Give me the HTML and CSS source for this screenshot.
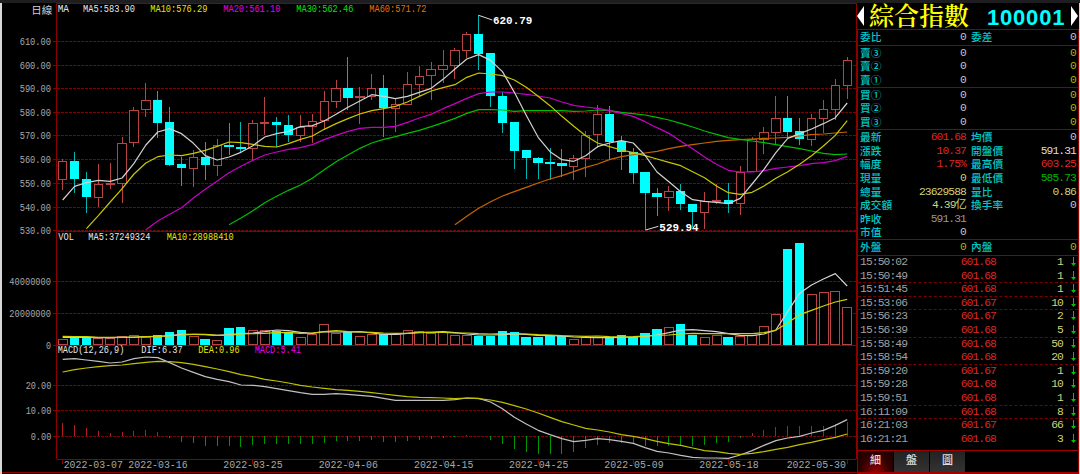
FILE: index.html
```html
<!DOCTYPE html>
<html lang="zh-Hant">
<head>
    <meta charset="UTF-8">
    <meta name="viewport" content="width=device-width, initial-scale=1.0">
    <title>綜合指數 100001</title>
    <link rel="stylesheet" href="styles.css">
</head>
<body>
    <div class="topbar"></div>
    <main class="screen">
        <!-- 3 chart units = 1px -->
        <svg class="chart" id="chart" viewBox="0 9 2571 1413" preserveAspectRatio="none"></svg>

        <aside class="quote">
            <header class="title">
                <span class="arrow left"></span>
                <h1>綜合指數</h1>
                <span class="code">100001</span>
                <span class="arrow right"></span>
            </header>
            <div class="panel">
                <section class="group ratio">
                    <div class="row"><b>委比</b><i>0</i><b>委差</b><i>0</i></div>
                </section>
                <section class="group sell">
                    <div class="row"><b>賣③</b><i>0</i><b></b><i class="gold">0</i></div>
                    <div class="row"><b>賣②</b><i>0</i><b></b><i class="gold">0</i></div>
                    <div class="row"><b>賣①</b><i>0</i><b></b><i class="gold">0</i></div>
                </section>
                <section class="group buy">
                    <div class="row"><b>買①</b><i>0</i><b></b><i class="gold">0</i></div>
                    <div class="row"><b>買②</b><i>0</i><b></b><i class="gold">0</i></div>
                    <div class="row"><b>買③</b><i>0</i><b></b><i class="gold">0</i></div>
                </section>
                <section class="group detail">
                    <div class="row"><b>最新</b><i class="red">601.68</i><b>均價</b><i>0</i></div>
                    <div class="row"><b>漲跌</b><i class="red">10.37</i><b>開盤價</b><i class="white">591.31</i></div>
                    <div class="row"><b>幅度</b><i class="red">1.75%</i><b>最高價</b><i class="red">603.25</i></div>
                    <div class="row"><b>現量</b><i class="pale">0</i><b>最低價</b><i class="green">585.73</i></div>
                    <div class="row"><b>總量</b><i class="pale">23629588</i><b>量比</b><i class="pale">0.86</i></div>
                    <div class="row"><b>成交額</b><i class="pale">4.39亿</i><b>換手率</b><i>0</i></div>
                    <div class="row"><b>昨收</b><i class="gray">591.31</i></div>
                    <div class="row"><b>市值</b><i>0</i></div>
                </section>
                <section class="group inout">
                    <div class="row"><b>外盤</b><i class="gold">0</i><b>內盤</b><i class="gold">0</i></div>
                </section>
                <section class="ticks" id="ticks"></section>
                <nav class="tabs">
                    <span class="tab active">細</span>
                    <span class="tab">盤</span>
                    <span class="tab">圖</span>
                </nav>
            </div>
        </aside>
        <div class="edge"></div>
    </main>
    <script src="chart.js"></script>
</body>
</html>
```
FILE: styles.css
```css
* {
    box-sizing: border-box;
}
body {
    margin: 0;
    width: 1080px;
    height: 474px;
    overflow: hidden;
    background-color: #000;
    color: #c8c8c8;
    font-family: "Liberation Mono", "Noto Sans CJK TC", monospace;
}
.topbar {
    height: 3px;
    background-color: #1e1e20;
}
.screen {
    display: flex;
    height: 471px;
    border-left: 2px solid #d8d8d8;
}

/* chart */
.chart {
    flex: none;
    width: 857px;
    height: 471px;
    margin-left: -2px;
}
.chart line, .chart rect {
    shape-rendering: crispEdges;
}
.chart .mark {
    shape-rendering: auto;
    stroke: #dcdcdc;
    stroke-width: 3;
}
.chart text {
    font-size: 31px;
    fill: #a0a0a0;
}
.chart .period {
    font-family: "Noto Sans CJK TC", sans-serif;
    font-size: 32px;
}
.chart .date {
    font-size: 35px;
}
.chart .peak {
    font-size: 34px;
    font-weight: bold;
}
.frame {
    stroke: #8c0000;
    stroke-width: 3;
    fill: none;
}
.grid {
    stroke: #820000;
    stroke-width: 3;
    stroke-dasharray: 9 3;
}
.up {
    stroke: #b94444;
    stroke-width: 3;
    fill: #000;
}
.down {
    stroke: #00ffff;
    stroke-width: 3;
    fill: #00ffff;
}
.wick.down {
    stroke: #00b4b4;
}
.bar-up {
    stroke: #b41e1e;
    stroke-width: 3;
}
.bar-down {
    stroke: #009600;
    stroke-width: 3;
}
.curve {
    fill: none;
    stroke-width: 3.6;
    stroke-linejoin: round;
}

/* quote panel */
.quote {
    flex: none;
    display: flex;
    flex-direction: column;
    width: 222px;
    height: 471px;
}
.title {
    display: flex;
    align-items: center;
    height: 26px;
    white-space: nowrap;
}
.title h1 {
    margin: 0 0 0 5px;
    width: 118px;
    height: 26px;
    font: 600 25px/23px "Noto Serif CJK TC", "Noto Sans CJK TC", serif;
    color: #ffff00;
}
.title .code {
    width: 81px;
    padding-top: 3px;
    font: 700 22px/26px "Liberation Sans", sans-serif;
    letter-spacing: 0.8px;
    color: #00ffff;
}
.arrow {
    width: 7px;
    height: 20px;
    background-color: #fff;
}
.arrow.left {
    clip-path: polygon(100% 0, 100% 100%, 0 50%);
}
.arrow.right {
    margin-left: 3px;
    clip-path: polygon(0 0, 100% 50%, 0 100%);
}
.panel {
    flex: 1;
    display: flex;
    flex-direction: column;
    border: 1px solid #8c0000;
    border-bottom: 2px solid #a00000;
}
.group {
    border-bottom: 1px solid #8c0000;
    padding-left: 2px;
}
.ratio { height: 15.5px; }
.sell, .buy { height: 42.4px; }
.detail { height: 110.2px; }
.inout { height: 15.5px; }
.row {
    display: grid;
    grid-template-columns: 44px 62px 49px 61px;
    height: 13.6px;
    line-height: 14px;
    white-space: nowrap;
}
.row b {
    font: 500 10.7px/14px "Noto Sans CJK TC", sans-serif;
    color: #00c8c8;
}
.row b:nth-child(3) {
    padding-left: 5px;
}
.row i {
    font-style: normal;
    font-size: 11.3px;
    letter-spacing: -0.9px;
    text-align: right;
}
.red { color: #dc2828; }
.gold { color: #b4b400; }
.pale { color: #d2d278; }
.green { color: #00b400; }
.gray { color: #969696; }
.white { color: #dcdcdc; }

.ticks {
    height: 195px;
    border-bottom: 1px solid #a00000;
}
.tick {
    display: grid;
    grid-template-columns: 65px 71px 67px 15px;
    height: 13.6px;
    padding-left: 2px;
    font-size: 11.3px;
    line-height: 12.4px;
    letter-spacing: -0.9px;
}
.tick.split {
    border-bottom: 1px dashed #780000;
}
.tick span {
    text-align: right;
}
.tick .time {
    text-align: left;
    color: #a0a0a0;
}
.tick svg {
    width: 7px;
    height: 10px;
    margin: 1px 0 0 7px;
    fill: #00c800;
}
.tabs {
    display: flex;
    gap: 1px;
    height: 21px;
}
.tab {
    width: 35px;
    background: linear-gradient(#222, #333);
    color: #e0e0e0;
    font: 500 11px/17px "Noto Sans CJK TC", sans-serif;
    text-align: center;
}
.tab.active {
    background: radial-gradient(ellipse at 50% 110%, #a00000, #300000 60%, #1a0000);
}
.edge {
    flex: 1;
    background-color: #f0c8c8;
}
```
FILE: chart.js
```js
const STEP = 35.66, X0 = 188;
const x = i => X0 + i * STEP;
const out = [];

// direction, high, body top, body bottom, low, volume top
const candles = `
u 477 482 538 570 343|d 456 482 534 578 338|d 516 536 590 638 337|u 491 553 592 620 338|u 489 550 554 567 338
u 412 428 550 608 332|u 322 329 428 442 329|u 249 301 329 350 337|d 273 301 366 414 330|d 321 367 493 497 322
d 471 493 502 557 316|u 450 472 506 560 332|d 427 472 493 540 342|u 417 436 495 529 346|d 369 436 440 465 309
d 366 440 444 455 306|u 359 370 446 482 316|u 291 367 371 405 316|d 350 367 373 440 317|d 346 374 404 427 322
u 344 380 406 425 335|u 342 362 380 430 326|u 272 304 362 388 298|u 241 265 304 324 325|d 171 265 292 329 321
u 261 289 293 372 332|u 223 265 289 299 327|d 226 265 322 412 327|u 296 311 325 395 328|u 216 253 313 316 314
u 197 227 253 290 317|u 185 206 227 300 323|u 150 196 207 250 322|u 145 151 196 238 329|u 97 102 151 175 330
d 46 102 159 210 333|d 160 160 287 321 332|d 277 288 366 399 319|d 366 367 450 507 321|d 450 451 473 537 336
d 471 473 486 537 336|d 443 487 489 540 333|d 446 489 497 531 333|u 464 474 498 539 343|u 392 404 475 531 337
u 316 342 404 443 335|d 319 342 424 477 339|d 407 424 455 509 331|d 444 456 517 552 337|d 517 517 578 690 324
d 563 578 590 649 313|u 558 574 592 633 307|d 552 574 611 630 296|d 612 612 635 680 331|u 576 604 637 686 335
u 553 599 605 613 331|d 549 599 609 639 336|u 498 515 610 644 332|u 411 417 515 515 330|u 381 397 418 461 304
u 288 355 397 433 268|d 288 354 394 412 71|d 354 394 416 435 53|u 342 355 418 437 208|u 300 328 355 400 202
u 238 256 328 360 199|u 171 181 256 297 247`.trim().split(/[|\n]/).map(s => s.split(' '));

const ma5 = [600,559,548,541,544,534,490,435,396,386,401,430,467,480,471,457,437,411,401,394,380,377,363,343,322,303,284,289,296,289,277,265,238,207,177,164,181,215,277,346,412,455,479,484,467,440,429,422,429,466,516,545,575,599,604,607,611,595,552,508,458,415,401,387,371,353,309];
const ma10 = [686,647,606,566,522,489,470,465,467,460,451,439,426,428,433,439,441,431,418,408,388,371,356,342,332,326,319,306,289,273,263,254,232,219,222,227,240,262,289,317,349,379,407,429,440,450,458,467,477,487,497,515,533,558,578,583,577,558,535,515,493,467,438,406,362];
const ma20 = [689,663,643,623,594,568,543,518,499,481,465,456,448,443,434,419,406,394,385,382,382,379,367,354,343,326,311,295,281,276,276,279,283,288,294,306,316,321,325,332,340,349,365,383,400,424,446,471,493,511,516,516,512,505,501,497,491,488,482,469];
const ma30 = [674,654,632,608,589,571,555,535,509,485,465,445,429,418,410,400,391,380,368,355,340,329,329,330,334,332,332,332,332,334,333,330,332,337,341,345,352,360,370,381,393,403,413,418,423,428,434,440,446,453,460,464,462];
const ma60 = [674,649,625,605,588,575,562,549,537,527,515,502,492,479,470,464,459,454,446,439,434,429,424,421,419,417,415,414,412,408,404,402,399,396];
const vol5 = [337,337,337,338,338,337,337,335,334,332,328,328,329,331,329,326,324,320,315,317,322,325,320,321,321,320,324,328,328,325,322,322,320,323,327,330,330,329,327,328,331,332,333,336,337,338,338,337,336,334,330,323,315,314,317,320,326,331,332,327,315,259,205,180,162,146,183];
const vol10 = [334,335,335,337,337,337,336,335,334,333,330,328,328,331,331,327,326,325,323,322,325,324,320,317,320,321,322,324,325,325,323,322,322,324,324,326,327,326,326,327,329,330,332,333,334,333,335,336,335,333,331,330,327,325,326,326,326,326,326,323,316,293,269,256,243,231,223];
const dif = [403,401,405,409,414,411,401,396,398,413,429,442,455,463,470,480,481,485,491,497,503,508,508,506,508,511,514,520,526,526,526,526,526,524,519,520,531,551,577,597,616,629,641,650,646,641,644,649,655,668,679,684,691,697,699,699,700,690,677,661,647,639,634,624,616,601,584];
const dea = [441,434,429,425,422,420,416,412,409,410,413,418,425,432,440,449,455,463,468,474,481,486,490,494,496,499,503,507,511,515,517,518,519,521,519,521,525,532,542,552,564,577,590,600,610,615,621,629,634,641,649,656,661,669,677,680,685,688,685,680,673,667,659,652,644,637,627];
const macd = [594,600,609,618,625,622,617,614,620,638,650,655,662,662,662,665,660,657,657,657,657,657,653,648,647,647,644,650,650,647,644,641,639,637,630,634,644,657,672,680,686,686,686,680,670,660,654,654,657,662,664,662,662,663,660,655,650,639,625,614,605,604,604,604,602,597,592];

function line(x1, y1, x2, y2, cls) {
    out.push(`<line x1="${x1}" y1="${y1}" x2="${x2}" y2="${y2}" class="${cls}"/>`);
}
// w is the drawn width of the text, left is its left edge
function label(str, left, base, w, color, cls = '') {
    out.push(`<text x="${left}" y="${base}" textLength="${w}" lengthAdjust="spacingAndGlyphs" style="fill:${color}" class="${cls}">${str}</text>`);
}
function curve(values, color, offset = 0) {
    const first = candles.length - values.length;
    const pts = values.map((v, i) => `${x(first + i).toFixed(1)},${v + offset}`).join(' ');
    out.push(`<polyline class="curve" points="${pts}" stroke="${color}"/>`);
}

// grids and axis labels
[['610.00', 124], ['600.00', 195], ['590.00', 266], ['580.00', 338], ['570.00', 407], ['560.00', 479], ['550.00', 550], ['540.00', 621], ['530.00', 692]].forEach(([t, y]) => {
    line(160, y, 2568, y, 'grid');
    label(t, 59, y + 11, 94, '#a8a8a8');
});
[['40000000', 845, 28, 125], ['20000000', 940, 28, 125], ['0', 1036, 138, 15], ['20.00', 1156, 77, 77], ['10.00', 1232, 77, 77], ['0.00', 1309, 92, 62]].forEach(([t, y, l, w]) => {
    line(160, y, 2568, y, 'grid');
    label(t, l, y + 11, w, '#a8a8a8');
});
line(170, 10, 2568, 10, 'frame');
line(170, 694, 2568, 694, 'frame');
line(170, 1036, 2568, 1036, 'frame');
line(170, 1378, 2568, 1378, 'frame');
line(6, 1418, 2571, 1418, 'frame');
line(170, 10, 170, 1378, 'frame');
line(2568, 10, 2568, 1378, 'frame');

candles.forEach(([d, high, top, bottom, low, vol], i) => {
    const cls = d === 'u' ? 'up' : 'down';
    const c = x(i);
    line(c, high, c, top, `wick ${cls}`);
    line(c, bottom, c, low, `wick ${cls}`);
    out.push(`<rect x="${c - 12.5}" y="${+top + 1}" width="25" height="${Math.max(bottom - top - 1, 1)}" class="${cls}"/>`);
    out.push(`<rect x="${c - 13}" y="${+vol + 676}" width="${d === 'u' ? 27 : 25}" height="${356 - vol}" class="${cls}"/>`);
    const m = macd[i];
    line(c, 1309, c, m + 675, m < 634 ? 'bar-up' : 'bar-down');
});

curve(ma60, '#c86400');
curve(ma30, '#00be00');
curve(ma20, '#c800c8');
curve(ma10, '#c8c800');
curve(ma5, '#d2d2d2');
curve(vol5, '#d2d2d2', 675);
curve(vol10, '#d2d200', 675);
curve(dif, '#c0c0c0', 675);
curve(dea, '#c0c000', 675);

// captions of the three panes
label('日線', 94, 42, 63, '#d2d2d2', 'period');
label('MA', 173, 35, 34, '#e6e6e6');
label('MA5:583.90', 249, 35, 156, '#e6e6e6');
label('MA10:576.29', 451, 35, 171, '#e6e600');
label('MA20:561.10', 670, 35, 171, '#e600e6');
label('MA30:562.46', 889, 35, 171, '#00e600');
label('MA60:571.72', 1108, 35, 171, '#e67300');
label('VOL', 175, 719, 47, '#e6e6e6');
label('MA5:37249324', 265, 719, 186, '#e6e6e6');
label('MA10:28988410', 500, 719, 201, '#e6e600');
label('MACD(12,26,9)', 173, 1059, 200, '#e6e6e6');
label('DIF:6.37', 424, 1059, 124, '#e6e6e6');
label('DEA:0.96', 595, 1059, 124, '#e6e600');
label('MACD:5.41', 764, 1059, 139, '#e600e6');

// highest and lowest price
line(1436, 46, 1477, 60, 'mark');
label('620.79', 1479, 73, 118, '#fff', 'peak');
line(1937, 690, 1975, 679, 'mark');
label('529.94', 1978, 692, 118, '#fff', 'peak');

[['2022-03-07', 191, 0], ['2022-03-16', 385, 8], ['2022-03-25', 670, 16], ['2022-04-06', 956, 24], ['2022-04-15', 1242, 32], ['2022-04-25', 1527, 40], ['2022-05-09', 1813, 48], ['2022-05-18', 2098, 56], ['2022-05-30', 2360, 66]].forEach(([t, l, i]) => {
    line(x(i), 1378, x(i), 1393, 'frame');
    label(t, l, 1404, 178, '#a8a8a8', 'date');
});

document.getElementById('chart').innerHTML = out.join('');

// time, price, volume, dashed rule below
const ticks = [
    ['15:50:02', '601.68', 1, 0], ['15:50:49', '601.68', 1, 1], ['15:51:45', '601.68', 1, 1],
    ['15:53:06', '601.67', 10, 1], ['15:56:23', '601.67', 2, 0], ['15:56:39', '601.68', 5, 1],
    ['15:58:49', '601.68', 50, 0], ['15:58:54', '601.68', 20, 1], ['15:59:20', '601.67', 1, 0],
    ['15:59:28', '601.68', 10, 0], ['15:59:51', '601.68', 1, 1], ['16:11:09', '601.68', 8, 1],
    ['16:21:03', '601.67', 66, 0], ['16:21:21', '601.68', 3, 0]
];
document.getElementById('ticks').innerHTML = ticks.map(([time, price, vol, split]) => `
    <div class="tick${split ? ' split' : ''}">
        <span class="time">${time}</span><span class="red">${price}</span><span class="pale">${vol}</span>
        <svg viewBox="0 0 7 10"><path d="M3 0h1v6h2L3.5 9 1 6h2z"/></svg>
    </div>`).join('');
```
